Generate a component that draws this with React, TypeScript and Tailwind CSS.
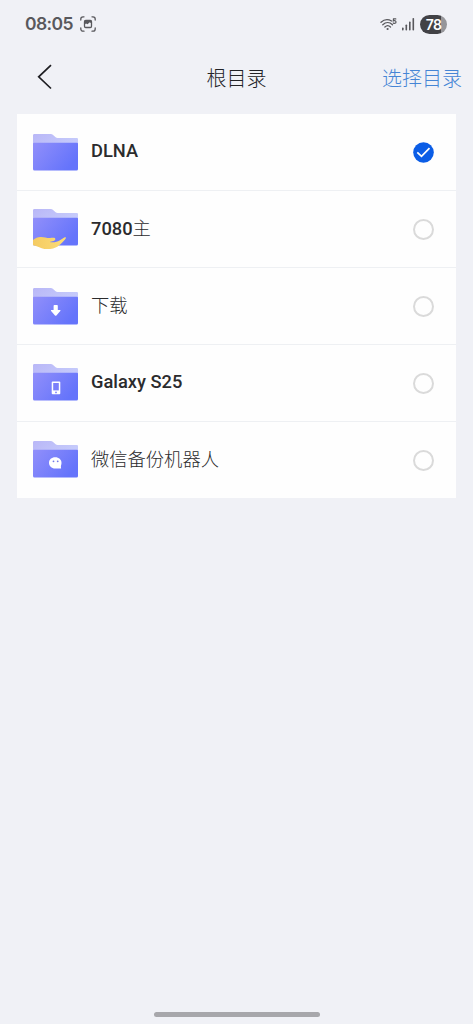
import type { ReactNode } from "react"

type Row = {
  name: string
  suffix?: string
  latin?: boolean
  iconPad: string
  textPad: string
  selected?: boolean
  badge?: ReactNode
}

const rows: Row[] = [
  { name: "DLNA", latin: true, iconPad: "pt-5", textPad: "pt-[25px]", selected: true },
  { name: "7080", suffix: "主", latin: true, iconPad: "pt-[18px]", textPad: "pt-6", badge: <HandBadge /> },
  { name: "下载", iconPad: "pt-5", textPad: "pt-6", badge: <DownloadBadge /> },
  { name: "Galaxy S25", latin: true, iconPad: "pt-[19px]", textPad: "pt-[25px]", badge: <PhoneBadge /> },
  { name: "微信备份机器人", iconPad: "pt-[19px]", textPad: "pt-6", badge: <ChatBadge /> },
]

function HandBadge() {
  return (
    <path
      d="M0 31C2.500 28.800 5 27.800 8 27.900c4 .1 6 1.500 12 .9 2.800-.2 3 2 1.200 2.900L16.500 33c3.500.8 7.500.2 10-1.400l4.800-3c1-.6 1.900-.5 1.600.4-.5 1.600-5.200 6.300-8.200 8.400-3.600 2.500-11 3.500-16 1.800C5 38 3.500 36.500 0 36.200Z"
      fill="url(#hand)"
    />
  )
}

function DownloadBadge() {
  return (
    <path
      d="M21.400 17h2.600a.8.800 0 0 1 .8.800v4.200h2c.7 0 .9.700.5 1.100l-3.900 4.300a1 1 0 0 1-1.400 0l-3.900-4.300c-.4-.4-.2-1.100.5-1.100h2v-4.200a.8.800 0 0 1 .8-.8Z"
      fill="#fff"
    />
  )
}

function PhoneBadge() {
  return (
    <>
      <rect x="18.700" y="17.500" width="8.600" height="12.800" rx="1" fill="#fff" />
      <rect x="20.200" y="19" width="5.600" height="7.400" fill="#7b7ffa" />
      <circle cx="23" cy="28.400" r=".9" fill="#7b7ffa" />
    </>
  )
}

function ChatBadge() {
  return (
    <>
      <path
        d="M22.200 16.200c3.700 0 6.300 2.400 6.300 5.500 0 1.700-.5 2.500-.6 3.700l.2 2.200h-5.900c-3.700 0-6.200-2.600-6.200-5.800 0-3.200 2.500-5.600 6.200-5.600Z"
        fill="#fff"
      />
      <circle cx="20.500" cy="20.300" r=".9" fill="#7278e8" />
      <circle cx="24.700" cy="20.300" r=".9" fill="#7278e8" />
    </>
  )
}

function Folder({ badge }: { badge?: ReactNode }) {
  return (
    <svg className="h-10 w-[45px] shrink-0 overflow-visible" viewBox="0 0 45 40">
      <defs>
        <linearGradient id="tab" x1="0" y1="0" x2="1" y2="0.400">
          <stop offset="0" stopColor="#b9b7f7" />
          <stop offset="1" stopColor="#c5cafb" />
        </linearGradient>
        <linearGradient id="body" x1="0" y1="0" x2="1" y2="0.500">
          <stop offset="0" stopColor="#918ffa" />
          <stop offset="1" stopColor="#6574fb" />
        </linearGradient>
        <linearGradient id="hand" x1="0" y1="0" x2="1" y2="0">
          <stop offset="0" stopColor="#f5cb62" />
          <stop offset="1" stopColor="#fbdc78" />
        </linearGradient>
      </defs>
      <path
        d="M1.500 0h15.700c1.200 0 2 .3 2.900 1.100l2.500 2.100c.6.500 1.200.7 2 .7h19c.9 0 1.400.5 1.400 1.400V12H0V1.500C0 .5.500 0 1.500 0Z"
        fill="url(#tab)"
      />
      <path
        d="M1 8.800h43a1 1 0 0 1 1 1V35a1.500 1.500 0 0 1-1.500 1.500h-42A1.500 1.500 0 0 1 0 35V9.800a1 1 0 0 1 1-1Z"
        fill="url(#body)"
      />
      {badge}
    </svg>
  )
}

function Radio({ selected }: { selected?: boolean }) {
  if (!selected) {
    return <span className="block size-[21px] rounded-full border-2 border-[#dadada]" />
  }
  return (
    <svg className="block size-[21px]" viewBox="0 0 21 21" fill="none">
      <circle cx="10.500" cy="10.500" r="10.300" fill="#0b5de6" />
      <path d="m4.300 10.300 4.200 4.100 8-8.200" stroke="#fff" strokeWidth="1.700" />
    </svg>
  )
}

function StatusBar() {
  return (
    <div className="flex h-12 items-center pr-[26px] pl-[25px] text-[#58585c]">
      <span className="w-[55px] font-['Inter'] text-[17.500px] font-semibold tracking-[-0.6px] whitespace-nowrap">
        08:05
      </span>
      <svg className="size-4" viewBox="0 0 16 16" fill="none" stroke="currentColor" strokeWidth="1.300" strokeLinecap="round">
        <path d="M.8 4V3A2.200 2.200 0 0 1 3 .8h1M12 .8h1A2.200 2.200 0 0 1 15.200 3v1M15.200 12v1a2.200 2.200 0 0 1-2.200 2.200h-1M4 15.200H3A2.200 2.200 0 0 1 .8 13v-1" />
        <rect x="4.500" y="4.500" width="7" height="7" rx="1.200" />
        <path d="M4.500 4.500h7v3L9.800 6.200 7.500 8.300 6 7.500l-1.500 1Z" fill="currentColor" stroke="none" />
      </svg>
      <div className="ml-auto flex items-center">
        <svg className="h-[13px] w-[17px]" viewBox="0 0 17 13" fill="none" stroke="currentColor" strokeWidth="1.300" strokeLinecap="round">
          <path d="M1 4.300c3.200-3 7.500-3.100 10.600-1.300M2.800 6.700c2.900-2.700 6.900-2.700 9.700 0M4.900 9c1.600-1.500 4-1.500 5.600 0" />
          <circle cx="7.600" cy="11" r="1.100" fill="currentColor" stroke="none" />
          <path d="M15.800.9h-2.300l-.2 2c1.400-.6 2.700-.1 2.700 1.100 0 1.300-1.600 1.800-2.800 1" strokeWidth="1.200" />
        </svg>
        <svg className="ml-[5px] h-[14px] w-[13px]" viewBox="0 0 13 14" fill="currentColor">
          <rect x="0" y="10.500" width="1.600" height="3" rx=".7" />
          <rect x="3.500" y="7.500" width="1.600" height="6" rx=".7" />
          <rect x="7" y="4.500" width="1.600" height="9" rx=".7" />
          <rect x="10.500" y="1" width="1.600" height="12.500" rx=".7" />
        </svg>
        <span className="ml-[5px] flex h-[19px] w-[27px] items-center justify-center rounded-full bg-linear-to-r from-[#424246] from-79% to-[#96969a] to-79% font-['Inter'] text-[14px] font-semibold tracking-[-0.6px] text-white">
          78
        </span>
      </div>
    </div>
  )
}

export default function App() {
  return (
    <div className="flex h-screen flex-col overflow-hidden bg-[#f0f1f6] font-['Roboto','Noto_Sans_CJK_SC',sans-serif]">
      <StatusBar />

      {/* Title bar */}
      <header className="grid h-[66px] grid-cols-3 items-start pt-[15px] pr-[11px]">
        <svg className="mt-px ml-[37px] h-[26px] w-4" viewBox="0 0 16 26" fill="none" stroke="#1e1e22" strokeWidth="1.700">
          <path d="M14 1.200 1.700 12.800 14 24.500" />
        </svg>
        <h1 className="pl-[11px] text-center font-['Noto_Sans_CJK_SC',sans-serif] text-[20px] leading-[30px] font-light text-[#222226]">
          根目录
        </h1>
        <button className="text-right font-['Noto_Sans_CJK_SC',sans-serif] text-[20px] leading-[30px] font-light text-[#4585d5]">
          选择目录
        </button>
      </header>

      {/* Folder list */}
      <ul className="mr-[17px] ml-[17px] divide-y divide-[#eef0f3] bg-[#fefefe]">
        {rows.map((row) => (
          <li key={row.name} className="flex h-[77px] items-start pr-[22px] pl-4 last:h-[76px]">
            <div className={row.iconPad}>
              <Folder badge={row.badge} />
            </div>
            <div className={`ml-[13px] flex-1 ${row.textPad}`}>
              <p
                className={
                  row.latin
                    ? "text-[18.300px] leading-6 font-medium text-[#2b2b2d]"
                    : "font-['Noto_Sans_CJK_SC',sans-serif] text-[18.300px] leading-6 font-light text-[#2b2b2d]"
                }
              >
                {row.name}
                {row.suffix && <span className="font-['Noto_Sans_CJK_SC',sans-serif] font-light">{row.suffix}</span>}
              </p>
            </div>
            <div className={row.selected ? "pt-7" : "pt-[27.500px]"}>
              <Radio selected={row.selected} />
            </div>
          </li>
        ))}
      </ul>

      {/* Home indicator */}
      <div className="mx-auto mt-auto mb-[7px] h-[5px] w-[166px] rounded-full bg-[#a7a7ab]" />
    </div>
  )
}
